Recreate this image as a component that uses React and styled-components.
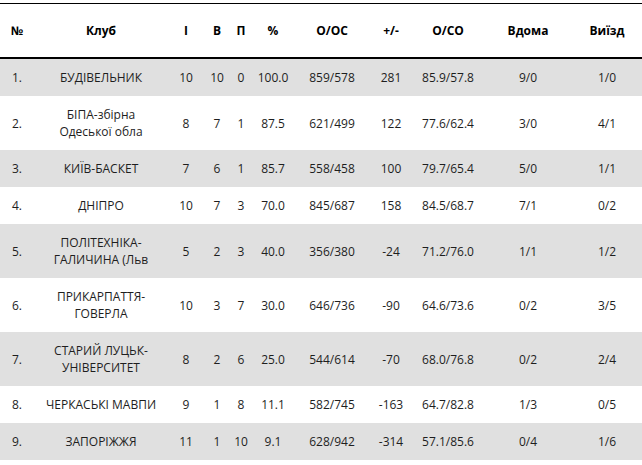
import React from 'react';
import styled, { createGlobalStyle } from 'styled-components';

const Global = createGlobalStyle`
  body {
    margin: 0;
    background: #fff;
    font-family: "Open Sans", "Liberation Sans", sans-serif;
  }
`;

const Table = styled.table`
  margin-top: 3px;
  width: 642px;
  border-collapse: collapse;
  table-layout: fixed;
  font-size: 12px;
  line-height: 17px;
  color: #1e1e1e;
`;

const Head = styled.thead`
  border-top: 1px solid #000;
  border-bottom: 2px solid #000;
`;

const HeadCell = styled.th`
  height: 53px;
  padding: 0 2px;
  font-weight: 700;
  color: #000;
  text-align: center;
`;

const Row = styled.tr`
  background: ${p => (p.$shade ? '#e0e0e0' : '#fff')};
`;

const Cell = styled.td`
  padding: 10px 2px;
  text-align: center;
  white-space: nowrap;
`;

const widths = [34, 134, 36, 26, 22, 42, 76, 42, 72, 88, 70];
const headers = ['№', 'Клуб', 'І', 'В', 'П', '%', 'О/ОС', '+/-', 'О/СО', 'Вдома', 'Виїзд'];

const rows = [
  [['БУДІВЕЛЬНИК'], 10, 10, 0, '100.0', '859/578', 281, '85.9/57.8', '9/0', '1/0'],
  [['БІПА-збірна', 'Одеської обла'], 8, 7, 1, '87.5', '621/499', 122, '77.6/62.4', '3/0', '4/1'],
  [['КИЇВ-БАСКЕТ'], 7, 6, 1, '85.7', '558/458', 100, '79.7/65.4', '5/0', '1/1'],
  [['ДНІПРО'], 10, 7, 3, '70.0', '845/687', 158, '84.5/68.7', '7/1', '0/2'],
  [['ПОЛІТЕХНІКА-', 'ГАЛИЧИНА (Льв'], 5, 2, 3, '40.0', '356/380', -24, '71.2/76.0', '1/1', '1/2'],
  [['ПРИКАРПАТТЯ-', 'ГОВЕРЛА'], 10, 3, 7, '30.0', '646/736', -90, '64.6/73.6', '0/2', '3/5'],
  [['СТАРИЙ ЛУЦЬК-', 'УНІВЕРСИТЕТ'], 8, 2, 6, '25.0', '544/614', -70, '68.0/76.8', '0/2', '2/4'],
  [['ЧЕРКАСЬКІ МАВПИ'], 9, 1, 8, '11.1', '582/745', -163, '64.7/82.8', '1/3', '0/5'],
  [['ЗАПОРІЖЖЯ'], 11, 1, 10, '9.1', '628/942', -314, '57.1/85.6', '0/4', '1/6'],
];

export default function App() {
  return (
    <>
      <Global />
      <Table>
        <colgroup>
          {widths.map((w, i) => <col key={i} style={{ width: w }} />)}
        </colgroup>
        <Head>
          <tr>
            {headers.map(h => <HeadCell key={h}>{h}</HeadCell>)}
          </tr>
        </Head>
        <tbody>
          {rows.map(([club, ...stats], i) => (
            <Row key={i} $shade={i % 2 === 0}>
              <Cell>{i + 1}.</Cell>
              <Cell>
                {club.map((line, j) => (
                  <React.Fragment key={j}>
                    {j > 0 && <br />}
                    {line}
                  </React.Fragment>
                ))}
              </Cell>
              {stats.map((s, j) => <Cell key={j}>{s}</Cell>)}
            </Row>
          ))}
        </tbody>
      </Table>
    </>
  );
}
